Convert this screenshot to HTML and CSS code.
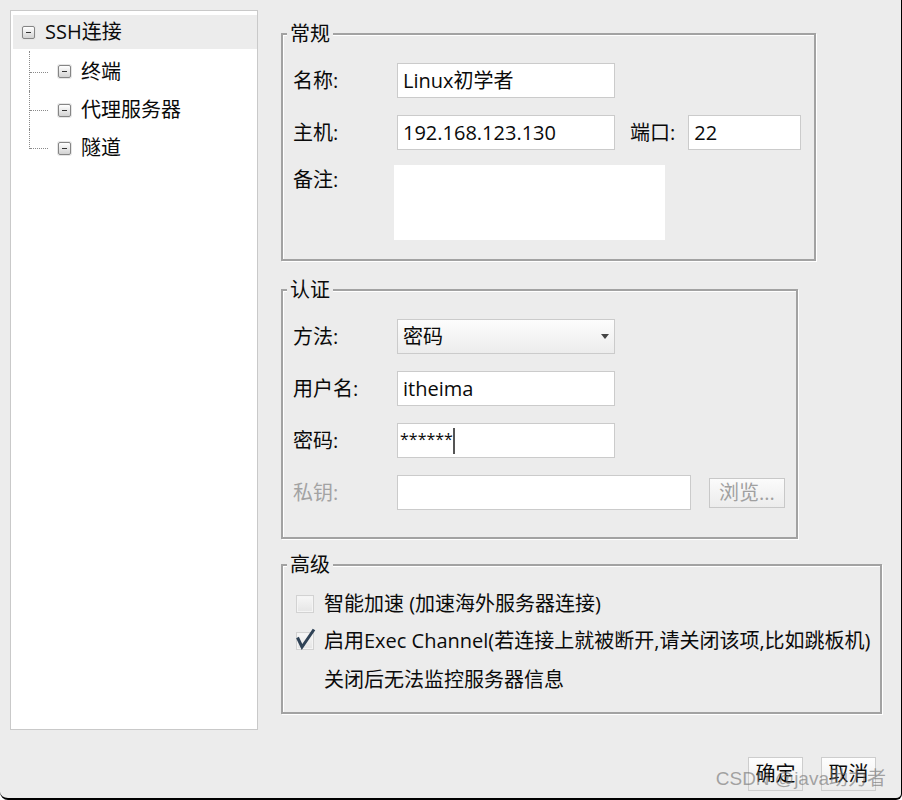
FILE: index.html
```html
<!DOCTYPE html>
<html lang="zh-CN">
<head>
    <meta charset="UTF-8">
    <title>SSH连接</title>
    <link rel="stylesheet" href="styles.css">
</head>
<body>
    <div class="window">
        <div class="main">
            <!-- left tree -->
            <div class="tree">
                <div class="tree-root"><span class="toggle"></span><span>SSH连接</span></div>
                <ul class="tree-children">
                    <li class="tree-item"><span class="branch"></span><span class="toggle"></span><span>终端</span></li>
                    <li class="tree-item"><span class="branch"></span><span class="toggle"></span><span>代理服务器</span></li>
                    <li class="tree-item last"><span class="branch"></span><span class="toggle"></span><span>隧道</span></li>
                </ul>
            </div>

            <div class="forms">
                <fieldset class="group group-general">
                    <legend>常规</legend>
                    <div class="row">
                        <span class="label">名称:</span>
                        <div class="field w-main">Linux初学者</div>
                    </div>
                    <div class="row">
                        <span class="label">主机:</span>
                        <div class="field w-main">192.168.123.130</div>
                        <span class="label-inline">端口:</span>
                        <div class="field w-port">22</div>
                    </div>
                    <div class="row row-top">
                        <span class="label label-top">备注:</span>
                        <div class="notes"></div>
                    </div>
                </fieldset>

                <fieldset class="group group-auth">
                    <legend>认证</legend>
                    <div class="row">
                        <span class="label">方法:</span>
                        <div class="field select w-main"><span>密码</span><span class="arrow"></span></div>
                    </div>
                    <div class="row">
                        <span class="label">用户名:</span>
                        <div class="field w-main">itheima</div>
                    </div>
                    <div class="row">
                        <span class="label">密码:</span>
                        <div class="field password w-main"><span class="dots">******</span><span class="cursor"></span></div>
                    </div>
                    <div class="row">
                        <span class="label disabled">私钥:</span>
                        <div class="field w-key"></div>
                        <button class="btn-browse">浏览...</button>
                    </div>
                </fieldset>

                <fieldset class="group group-advanced">
                    <legend>高级</legend>
                    <div class="check-row">
                        <span class="checkbox"></span>
                        <span>智能加速 (加速海外服务器连接)</span>
                    </div>
                    <div class="check-row">
                        <span class="checkbox">
                            <svg class="tick" width="18" height="18" viewBox="0 0 18 18"><path d="M1.5 5.5 L6 15 L18 -2.5" fill="none" stroke="#2f4256" stroke-width="3" stroke-linejoin="miter"/></svg>
                        </span>
                        <span>启用Exec Channel(若连接上就被断开,请关闭该项,比如跳板机)</span>
                    </div>
                    <div class="check-row note">关闭后无法监控服务器信息</div>
                </fieldset>
            </div>
        </div>

        <div class="footer">
            <button class="btn">确定</button>
            <button class="btn">取消</button>
        </div>

        <div class="watermark">CSDN @java助力者</div>
    </div>
</body>
</html>
```

FILE: styles.css
```css
body {
    margin: 0;
    font-family: "Open Sans", "Noto Sans CJK SC", sans-serif;
    font-size: 20px;
    line-height: 24px;
    color: #0a0a0a;
}
.window {
    position: relative;
    width: 902px;
    height: 800px;
    box-sizing: border-box;
    background: #ececec;
    border-right: 1px solid #000;
    border-bottom: 2px solid #000;
    border-radius: 0 0 6px 8px;
    display: flex;
    flex-direction: column;
    overflow: hidden;
}
.main {
    display: flex;
    align-items: flex-start;
    gap: 23px;
    padding: 10px 0 0 10px;
}

/* tree */
.tree {
    width: 248px;
    height: 720px;
    box-sizing: border-box;
    border: 1px solid #c9c9c9;
    background: #fff;
    padding: 4px 0 0 2px;
    flex: none;
}
.tree-root {
    display: flex;
    align-items: center;
    gap: 10px;
    height: 34px;
    padding-left: 9px;
    background: #ececec;
}
.tree-children {
    list-style: none;
    margin: 2px 0 0;
    padding: 0 0 0 16px;
}
.tree-item {
    display: flex;
    align-items: center;
    height: 38px;
}
.tree-item:first-child {
    height: 40px;
    padding-top: 1px;
    box-sizing: border-box;
}
.branch {
    align-self: flex-start;
    width: 19px;
    height: 38px;
    box-sizing: border-box;
    border-left: 1px dotted #8a8a8a;
    flex: none;
}
.branch::after {
    content: "";
    display: block;
    margin-top: 19px;
    border-top: 1px dotted #8a8a8a;
}
.tree-item:first-child .branch {
    height: 40px;
    margin-top: -1px;
}
.tree-item:first-child .branch::after {
    margin-top: 21px;
}
.tree-item.last .branch {
    height: 20px;
}
.tree-item .toggle {
    margin: 0 10px 0 10px;
}
.toggle {
    width: 13px;
    height: 13px;
    box-sizing: border-box;
    border: 1px solid #858585;
    border-radius: 2px;
    background: linear-gradient(#ffffff, #d2d2d2);
    box-shadow: 0 0 0 1px #e6e6e6;
    display: flex;
    align-items: center;
    justify-content: center;
    flex: none;
}
.toggle::before {
    content: "";
    width: 5px;
    height: 1px;
    background: #333;
}

/* group boxes */
.forms {
    display: flex;
    flex-direction: column;
    align-items: flex-start;
}
.group {
    box-sizing: border-box;
    margin: 0;
    min-width: 0;
    padding: 19px 10px 19px 10px;
    border: 2px solid #a2a2a2;
    box-shadow: inset 1px 1px 0 #fff, 1px 1px 0 #fff;
}
.group legend {
    padding: 0 3px;
    margin-left: -6px;
    line-height: 20px;
    background: #ececec;
}
.group-general {
    width: 535px;
    margin-top: 14px;
}
.group-auth {
    width: 517px;
    margin-top: 19px;
    padding-bottom: 27px;
}
.group-advanced {
    width: 601px;
    margin-top: 16px;
    padding-top: 10px;
    padding-bottom: 14px;
}

.row {
    display: flex;
    align-items: center;
}
.row + .row {
    margin-top: 17px;
}
.row.row-top {
    align-items: flex-start;
    margin-top: 15px;
}
.label {
    width: 104px;
    flex: none;
}
.label-top {
    padding-top: 3px;
}
.label.disabled {
    color: #a3a3a3;
}
.label-inline {
    margin: 0 13px 0 15px;
}
.field {
    height: 35px;
    box-sizing: border-box;
    border: 1px solid #cbcbcb;
    background: #fff;
    padding: 0 5px;
    display: flex;
    align-items: center;
    white-space: nowrap;
}
.w-main { width: 218px; }
.w-port { width: 113px; }
.w-key { width: 294px; }
.notes {
    width: 271px;
    height: 75px;
    margin-left: -3px;
    background: #fff;
}
.select {
    justify-content: space-between;
    background: linear-gradient(#fdfdfd, #ececec);
}
.arrow {
    width: 0;
    height: 0;
    border-left: 4px solid transparent;
    border-right: 4px solid transparent;
    border-top: 5px solid #444;
}
.password {
    padding-left: 2px;
}
.dots {
    font-size: 16px;
    line-height: 16px;
    margin-top: -4px;
}
.cursor {
    width: 2px;
    height: 26px;
    background: #555;
}
.btn-browse {
    margin-left: 18px;
    width: 76px;
    height: 30px;
    padding: 0;
    border: 1px solid #c8c8c8;
    background: linear-gradient(#fbfbfb, #ececec);
    color: #a0a0a0;
    font: inherit;
    line-height: 28px;
}

/* advanced */
.check-row {
    display: flex;
    align-items: center;
    height: 37px;
    padding-left: 3px;
    white-space: nowrap;
}
.check-row.note {
    padding-left: 31px;
    margin-top: 2px;
}
.checkbox {
    width: 18px;
    height: 18px;
    box-sizing: border-box;
    border: 1px solid #d2d2d2;
    background: linear-gradient(#f7f7f7, #e5e5e5);
    box-shadow: inset 0 0 0 1px #f4f4f4;
    margin-right: 10px;
    flex: none;
}
.tick {
    display: block;
    margin: -1px 0 0 -1px;
    overflow: visible;
}

/* footer */
.footer {
    display: flex;
    justify-content: flex-end;
    gap: 18px;
    margin-top: 27px;
    padding-right: 25px;
}
.btn {
    width: 55px;
    height: 34px;
    padding: 0;
    border: 1px solid #cdcdcd;
    background: linear-gradient(#fefefe, #ececec);
    font: inherit;
    color: #0a0a0a;
    line-height: 32px;
}
.watermark {
    position: absolute;
    right: 15px;
    bottom: 7px;
    font-family: "Liberation Sans", "Noto Sans CJK SC", sans-serif;
    font-size: 19px;
    color: rgba(110, 110, 110, 0.6);
    white-space: nowrap;
}
```
